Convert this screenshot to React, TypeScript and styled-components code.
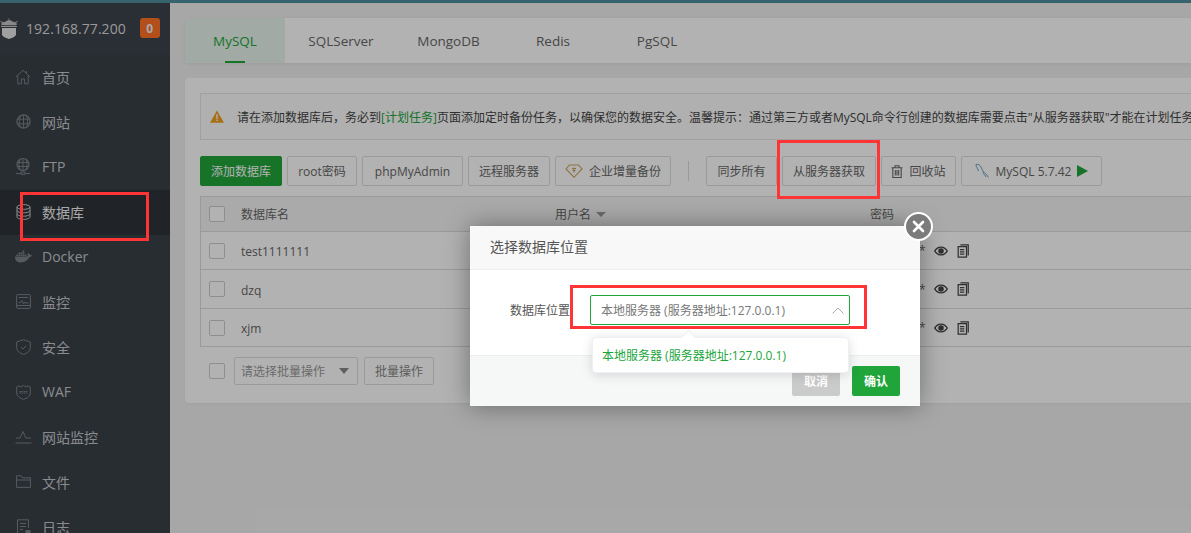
import React from "react";
import styled, { createGlobalStyle } from "styled-components";
import { FaDocker } from "react-icons/fa";

const Global = createGlobalStyle`
  html, body { margin: 0; padding: 0; height: 100%; overflow: hidden; background: #f0f0f0; }
  * { box-sizing: border-box; }
  body { font-family: "Open Sans", "Noto Sans CJK SC", sans-serif; font-size: 12px; color: #666; }
`;

const Page = styled.div`
  position: relative;
  width: 1191px;
  height: 533px;
  overflow: hidden;
  display: flex;
  flex-direction: column;
`;
const Stripe = styled.div`
  height: 3px;
  flex: none;
  background: #4f8f9e;
`;
const Body = styled.div`
  flex: 1;
  min-height: 0;
  display: flex;
`;
const Sidebar = styled.aside`
  width: 170px;
  flex: none;
  background: #3a4148;
  overflow: hidden;
`;
const Brand = styled.div`
  height: 52px;
  display: flex;
  align-items: center;
  background: #3c444d;
  color: #dcdcdc;
  font-size: 14px;
  letter-spacing: 0.05px;
  overflow: hidden;
  padding-bottom: 2px;
`;
const BrandIcon = styled.svg`
  width: 18px;
  height: 21px;
  margin-left: 0;
  margin-right: 8px;
  flex: none;
`;
const Badge = styled.span`
  width: 20px;
  height: 20px;
  margin-left: 14px;
  border-radius: 3px;
  background: #ff7227;
  color: #f2f2f2;
  font-weight: 700;
  font-size: 12px;
  display: flex;
  align-items: center;
  justify-content: center;
`;
const NavItem = styled.div<{ $active?: boolean }>`
  height: 45px;
  display: flex;
  align-items: center;
  gap: 11px;
  padding: 0 0 2px 15px;
  font-size: 14px;
  color: ${(p) => (p.$active ? "#f0f0f0" : "#c4c8cc")};
  background: ${(p) => (p.$active ? "#2f3338" : "transparent")};
`;
const NavGlyph = styled.span<{ $active?: boolean }>`
  width: 16px;
  height: 18px;
  flex: none;
  display: flex;
  align-items: center;
  justify-content: center;
  color: ${(p) => (p.$active ? "#c8ccd0" : "#7d838a")};
  svg { display: block; overflow: visible; }
`;
const Main = styled.main`
  flex: 1;
  min-width: 0;
  padding: 15px 0 0 15px;
  display: flex;
  flex-direction: column;
  gap: 15px;
`;
const Tabs = styled.nav`
  height: 45px;
  display: flex;
  background: #fff;
  border-radius: 4px 0 0 4px;
  box-shadow: 0 1px 4px rgba(0, 0, 0, 0.08);
  flex: none;
`;
const Tab = styled.div<{ $w: number; $active?: boolean }>`
  position: relative;
  width: ${(p) => p.$w}px;
  display: flex;
  align-items: center;
  justify-content: center;
  font-size: 13.5px;
  color: ${(p) => (p.$active ? "#20a53a" : "#666")};
  background: ${(p) => (p.$active ? "#e9f4ec" : "transparent")};
  border-radius: ${(p) => (p.$active ? "4px 0 0 4px" : "0")};
  ${(p) =>
    p.$active
      ? `&::after { content: ""; position: absolute; left: 40px; bottom: 0; width: 20px; height: 2px; background: #20a53a; }`
      : ""}
`;
const Panel = styled.section`
  height: 325px;
  flex: none;
  background: #fff;
  border-radius: 4px 0 0 4px;
  box-shadow: 0 1px 3px rgba(0, 0, 0, 0.05);
  padding: 15px 0 0 15px;
  overflow: hidden;
`;
const Alert = styled.div`
  height: 47px;
  width: 1100px;
  display: flex;
  align-items: center;
  gap: 13px;
  padding-left: 9px;
  border: 1px solid #e6e6e6;
  background: #fcfcfc;
  color: #444;
  white-space: nowrap;
  overflow: hidden;
  svg { flex: none; }
`;
const AlertLink = styled.span`
  color: #20a53a;
`;
const Toolbar = styled.div`
  margin-top: 16px;
  height: 30px;
  display: flex;
  align-items: center;
  gap: 5px;
`;
const Button = styled.div<{ $primary?: boolean; $w?: number }>`
  height: 30px;
  flex: none;
  ${(p) => (p.$w ? `width: ${p.$w}px;` : "padding: 0 11px;")}
  display: flex;
  align-items: center;
  justify-content: center;
  gap: 6px;
  border-radius: 2px;
  white-space: nowrap;
  border: 1px solid ${(p) => (p.$primary ? "#20a53a" : "#ddd")};
  background: ${(p) => (p.$primary ? "#20a53a" : "#fff")};
  color: ${(p) => (p.$primary ? "#fff" : "#666")};
`;
const Divider = styled.div`
  width: 1px;
  height: 20px;
  flex: none;
  margin: 0 12px;
  background: #ddd;
`;
const Table = styled.div`
  margin-top: 10px;
  width: 1100px;
  border: 1px solid #ddd;
  border-bottom: none;
`;
const Row = styled.div<{ $h: number; $head?: boolean }>`
  height: ${(p) => p.$h}px;
  display: grid;
  grid-template-columns: 40px 314px 315px 1fr;
  align-items: center;
  border-bottom: 1px solid #ddd;
  background: ${(p) => (p.$head ? "#f4f4f4" : "#fff")};
`;
const CheckCell = styled.div`
  padding-left: 8px;
`;
const Check = styled.span`
  display: block;
  flex: none;
  width: 16px;
  height: 16px;
  border: 1px solid #ccc;
  border-radius: 2px;
  background: #fff;
`;
const NameCell = styled.div`
  padding-top: 2px;
`;
const UserHead = styled.div`
  display: flex;
  align-items: center;
  gap: 5px;
`;
const SortCaret = styled.span`
  width: 0;
  height: 0;
  border-left: 5px solid transparent;
  border-right: 5px solid transparent;
  border-top: 5px solid #999;
`;
const PassCell = styled.div`
  display: flex;
  align-items: center;
  gap: 8px;
  color: #666;
  letter-spacing: 0.4px;
`;
const PassIcon = styled.svg`
  width: 14px;
  height: 14px;
  flex: none;
`;
const Footer = styled.div`
  margin-top: 10px;
  height: 27px;
  display: flex;
  align-items: center;
  gap: 6px;
  padding-left: 9px;
`;
const BatchSelect = styled.div`
  width: 124px;
  height: 28px;
  margin-left: 3px;
  padding: 0 8px 0 6px;
  display: flex;
  align-items: center;
  justify-content: space-between;
  border: 1px solid #ddd;
  border-radius: 2px;
  color: #999;
`;
const BatchCaret = styled.span`
  width: 0;
  height: 0;
  border-left: 5.5px solid transparent;
  border-right: 5.5px solid transparent;
  border-top: 6px solid #888;
`;
const BatchButton = styled.div`
  width: 70px;
  height: 28px;
  display: flex;
  align-items: center;
  justify-content: center;
  border: 1px solid #ddd;
  border-radius: 2px;
  color: #888;
`;
const Overlay = styled.div`
  position: absolute;
  inset: 0;
  background: rgba(0, 0, 0, 0.3);
`;
const Modal = styled.div`
  position: absolute;
  left: 470px;
  top: 226px;
  width: 450px;
  height: 180px;
  display: flex;
  flex-direction: column;
  background: #fff;
  box-shadow: 0 0 24px rgba(0, 0, 0, 0.38);
`;
const ModalTitle = styled.div`
  height: 44px;
  flex: none;
  padding: 0 0 3px 20px;
  display: flex;
  align-items: center;
  background: #f8f8f8;
  border-bottom: 1px solid #eee;
  color: #555;
  font-size: 14px;
`;
const ModalBody = styled.div`
  flex: 1;
  display: flex;
  align-items: flex-start;
  padding: 25px 0 0 40px;
`;
const FieldLabel = styled.div`
  width: 60px;
  height: 30px;
  margin-right: 20px;
  line-height: 32px;
  color: #555;
  white-space: nowrap;
`;
const SelectBox = styled.div`
  width: 260px;
  height: 30px;
  padding: 0 5px 0 10px;
  display: flex;
  align-items: center;
  justify-content: space-between;
  border: 1px solid #20a53a;
  border-radius: 2px;
  color: #777;
`;
const ModalFooter = styled.div`
  height: 51px;
  flex: none;
  padding: 10px 20px 0 0;
  display: flex;
  justify-content: flex-end;
  gap: 12px;
  background: #f6f8f8;
  border-top: 1px solid #eee;
`;
const ModalButton = styled.div<{ $primary?: boolean }>`
  width: 48px;
  height: 30px;
  display: flex;
  align-items: center;
  justify-content: center;
  border-radius: 2px;
  font-weight: 700;
  color: #fff;
  background: ${(p) => (p.$primary ? "#20a53a" : "#cbcbcb")};
`;
const Close = styled.div`
  position: absolute;
  right: -13px;
  top: -14px;
  width: 29px;
  height: 29px;
  border-radius: 50%;
  background: #7b7b7b;
  border: 2px solid #fff;
  display: flex;
  align-items: center;
  justify-content: center;
`;
const Dropdown = styled.div`
  position: absolute;
  left: 122px;
  top: 111px;
  width: 257px;
  height: 36px;
  padding-left: 9px;
  display: flex;
  align-items: center;
  background: #fff;
  border: 1px solid #eef0f5;
  border-radius: 4px;
  box-shadow: 0 2px 12px rgba(0, 0, 0, 0.14);
  color: #20a53a;
  &::before {
    content: "";
    position: absolute;
    left: 90px;
    top: -6px;
    width: 10px;
    height: 10px;
    background: #fff;
    border-left: 1px solid #eef0f5;
    border-top: 1px solid #eef0f5;
    transform: rotate(45deg);
  }
`;
const RedBox = styled.div<{ $x: number; $y: number; $w: number; $h: number }>`
  position: absolute;
  left: ${(p) => p.$x}px;
  top: ${(p) => p.$y}px;
  width: ${(p) => p.$w}px;
  height: ${(p) => p.$h}px;
  border: 3px solid #ff3535;
`;

const s = { fill: "none", stroke: "currentColor", strokeWidth: 1 } as const;
const navIcons: Record<string, React.ReactNode> = {
  home: (
    <svg width="16" height="16" viewBox="0 0 16 16" {...s}>
      <path d="M.8 8 8 1.3 15.2 8M2.8 6.6v8.2h3.6V10h3.2v4.8h3.6V6.6M11.500 2v2" />
    </svg>
  ),
  globe: (
    <svg width="15" height="15" viewBox="0 0 16 16" {...s}>
      <circle cx="8" cy="8" r="7" strokeWidth="1.3" />
      <path d="M1 5.500h14M1 10.500h14M8 1v14M4.800 1.800c-1.600 3.600-1.600 8.800 0 12.400M11.200 1.800c1.600 3.600 1.600 8.800 0 12.400" />
    </svg>
  ),
  ftp: (
    <svg width="16" height="17" viewBox="0 0 16 17" {...s}>
      <circle cx="8" cy="6.500" r="6" strokeWidth="1.2" />
      <path d="M2 4.500h12M2 8.500h12M8 .5v12M5 1.500c-1.300 3-1.300 7 0 10M11 1.500c1.300 3 1.300 7 0 10M1 15.500h5M10 15.500h5M6 14h4v2.400H6z" />
    </svg>
  ),
  db: (
    <svg width="15" height="16" viewBox="0 0 15 16" {...s}>
      <ellipse cx="7.500" cy="3" rx="6.500" ry="2.400" />
      <path d="M1 3v10c0 1.300 2.900 2.400 6.500 2.400S14 14.300 14 13V3M1 6.400c0 1.300 2.900 2.400 6.500 2.400S14 7.700 14 6.400M1 9.800c0 1.300 2.900 2.400 6.500 2.400S14 11.100 14 9.800" />
    </svg>
  ),
  docker: <FaDocker size={17} />,
  monitor: (
    <svg width="15" height="15" viewBox="0 0 15 15" {...s}>
      <rect x=".6" y=".6" width="13.800" height="13.800" rx="1" />
      <path d="M3 3.500h9M2.500 8.500h2l1.500-2 1.500 3.500 1.500-2 1 1h2.500M.6 11.500h13.800" />
    </svg>
  ),
  shield: (
    <svg width="15" height="16" viewBox="0 0 15 16" {...s}>
      <path d="M7.500.7 14.300 3v5.500c0 3.500-3 5.800-6.800 7C3.700 14.300.7 12 .7 8.500V3z" />
      <path d="m5 8 2 2 3.300-3.300" />
    </svg>
  ),
  waf: (
    <svg width="15" height="16" viewBox="0 0 15 16" {...s}>
      <path d="M.7 3 3 1.800 5 3l2.500-1.600L10 3l2-1.200L14.300 3v6c0 3-3 5-6.800 6.300C3.700 14 .7 12 .7 9z" />
      <path d="M3.500 7.500h8M3.500 9h8" strokeDasharray="1.500 .6" />
    </svg>
  ),
  chart: (
    <svg width="17" height="14" viewBox="0 0 17 14" {...s}>
      <path d="M1 8h4l3-6.500L11 8h5M.5 13h16" />
    </svg>
  ),
  folder: (
    <svg width="15" height="13" viewBox="0 0 15 13" {...s}>
      <path d="M.6 12.400V.8h4.600l1.400 2h7.800v2M.6 12.400h13.800V5H.6" />
    </svg>
  ),
  log: (
    <svg width="15" height="16" viewBox="0 0 15 16" {...s}>
      <path d="M9 15H1.500V.8h11v8M4 4.500h6M4 7.500h6M4 10.500h3" />
      <rect x="10" y="11.500" width="4" height="3.500" fill="currentColor" />
    </svg>
  ),
};

const nav = [
  ["home", "首页"],
  ["globe", "网站"],
  ["ftp", "FTP"],
  ["db", "数据库"],
  ["docker", "Docker"],
  ["monitor", "监控"],
  ["shield", "安全"],
  ["waf", "WAF"],
  ["chart", "网站监控"],
  ["folder", "文件"],
  ["log", "日志"],
];
const tabs: [string, number][] = [
  ["MySQL", 100],
  ["SQLServer", 112],
  ["MongoDB", 103],
  ["Redis", 106],
  ["PgSQL", 102],
];
const rows: [string, number][] = [
  ["test1111111", 38],
  ["dzq", 39],
  ["xjm", 38],
];

const Eye = () => (
  <PassIcon viewBox="0 0 16 16">
    <path
      fill="#444"
      fillRule="evenodd"
      d="M8 2.800C4.400 2.800 1.400 5 0 8c1.400 3 4.400 5.200 8 5.200S14.600 11 16 8c-1.400-3-4.400-5.200-8-5.200zm0 1.500c2.700 0 5 1.500 6.200 3.700-1.200 2.200-3.500 3.700-6.200 3.700S3 10.200 1.800 8C3 5.800 5.300 4.300 8 4.300zM8 4.800a3.200 3.200 0 1 0 0 6.400 3.200 3.200 0 0 0 0-6.400z"
    />
  </PassIcon>
);
const Copy = () => (
  <PassIcon viewBox="0 0 14 16" fill="none" stroke="#444" strokeWidth="1.400">
    <path d="M4 1h9v12M3 3h8v12H1.500V3zM3.500 6.500h5M3.500 9h5M3.500 11.500h5" />
  </PassIcon>
);

export default function App() {
  return (
    <Page>
      <Global />
      <Stripe />
      <Body>
        <Sidebar>
          <Brand>
            <BrandIcon viewBox="0 0 18 21">
              <path d="M9 0v2M1 6l8-4 8 4-1.500 1h-13z" fill="#c4c4c4" stroke="#c4c4c4" strokeWidth=".5" />
              <path d="M.5 3.500 4 5M17.500 3.500 14 5M1 8.500h16" stroke="#c4c4c4" strokeWidth="1" fill="none" />
              <path d="M2 10h14v6.500c0 1.500-3 3.500-7 4.500-4-1-7-3-7-4.500z" fill="#e6e6e6" />
            </BrandIcon>
            192.168.77.200
            <Badge>0</Badge>
          </Brand>
          {nav.map(([icon, label]) => (
            <NavItem key={label} $active={icon === "db"}>
              <NavGlyph $active={icon === "db"}>{navIcons[icon]}</NavGlyph>
              {label}
            </NavItem>
          ))}
        </Sidebar>
        <Main>
          <Tabs>
            {tabs.map(([t, w], i) => (
              <Tab key={t} $w={w} $active={i === 0}>
                {t}
              </Tab>
            ))}
          </Tabs>
          <Panel>
            <Alert>
              <svg width="14" height="13" viewBox="0 0 16 14">
                <path d="M8 0 16 14H0z" fill="#f0a020" />
                <path d="M7.200 4.500h1.600v5H7.200zM7.200 10.500h1.600v1.600H7.200z" fill="#fff" />
              </svg>
              <span>
                请在添加数据库后，务必到<AlertLink>[计划任务]</AlertLink>
                页面添加定时备份任务，以确保您的数据安全。温馨提示：通过第三方或者MySQL命令行创建的数据库需要点击"从服务器获取"才能在计划任务中显示
              </span>
            </Alert>
            <Toolbar>
              <Button $primary $w={82}>添加数据库</Button>
              <Button $w={70}>root密码</Button>
              <Button $w={101}>phpMyAdmin</Button>
              <Button $w={82}>远程服务器</Button>
              <Button $w={116}>
                <svg width="18" height="14" viewBox="0 0 18 14" fill="none" stroke="#c8a35a" strokeWidth="1.100">
                  <path d="M4.500 1h9L17 5l-8 8.300L1 5z" />
                  <path d="M7 4.500h4M9 3.500v5M7.500 6.500h3" />
                </svg>
                企业增量备份
              </Button>
              <Divider />
              <Button $w={71}>同步所有</Button>
              <Button $w={94}>从服务器获取</Button>
              <Button $w={75}>
                <svg width="12" height="13" viewBox="0 0 12 13" fill="none" stroke="#666" strokeWidth="1.100">
                  <path d="M.5 2.700h11M4 2.500V.8h4v1.700M1.800 3v9.500h8.400V3M4.300 5v5.500M6 5v5.500M7.700 5v5.500" />
                </svg>
                回收站
              </Button>
              <Button $w={141}>
                <svg width="15" height="16" viewBox="0 0 15 16" fill="none" stroke="#6d9fc4" strokeWidth="1">
                  <path d="M1 1.500c2.500-.5 4 .5 5 2.500 1 2.500 2.500 5.500 5 7l2.500 3.500M1 1.500C.5 3.500 3 5.500 3.500 8M8 9c.5 2 2 3.500 3 5" />
                </svg>
                MySQL 5.7.42
                <svg width="11" height="12" viewBox="0 0 11 12">
                  <path d="M0 0 11 6 0 12z" fill="#20a53a" />
                </svg>
              </Button>
            </Toolbar>
            <Table>
              <Row $h={35} $head>
                <CheckCell><Check /></CheckCell>
                <div>数据库名</div>
                <UserHead>用户名<SortCaret /></UserHead>
                <div>密码</div>
              </Row>
              {rows.map(([name, h]) => (
                <Row key={name} $h={h}>
                  <CheckCell><Check /></CheckCell>
                  <NameCell>{name}</NameCell>
                  <div />
                  <PassCell>********<Eye /><Copy /></PassCell>
                </Row>
              ))}
            </Table>
            <Footer>
              <Check />
              <BatchSelect>请选择批量操作<BatchCaret /></BatchSelect>
              <BatchButton>批量操作</BatchButton>
            </Footer>
          </Panel>
        </Main>
      </Body>
      <Overlay />
      <Modal>
        <Close>
          <svg width="13" height="13" viewBox="0 0 13 13" stroke="#fff" strokeWidth="2.600" strokeLinecap="round">
            <path d="M2 2l9 9M11 2l-9 9" />
          </svg>
        </Close>
        <ModalTitle>选择数据库位置</ModalTitle>
        <ModalBody>
          <FieldLabel>数据库位置</FieldLabel>
          <SelectBox>
            本地服务器 (服务器地址:127.0.0.1)
            <svg width="12" height="7" viewBox="0 0 12 7" fill="none" stroke="#aaa" strokeWidth="1">
              <path d="M.5 6.500 6 1l5.500 5.500" />
            </svg>
          </SelectBox>
        </ModalBody>
        <ModalFooter>
          <ModalButton>取消</ModalButton>
          <ModalButton $primary>确认</ModalButton>
        </ModalFooter>
        <Dropdown>本地服务器 (服务器地址:127.0.0.1)</Dropdown>
      </Modal>
      <RedBox $x={20} $y={192} $w={129} $h={49} />
      <RedBox $x={777} $y={140} $w={103} $h={59} />
      <RedBox $x={570} $y={285} $w={297} $h={44} />
    </Page>
  );
}
